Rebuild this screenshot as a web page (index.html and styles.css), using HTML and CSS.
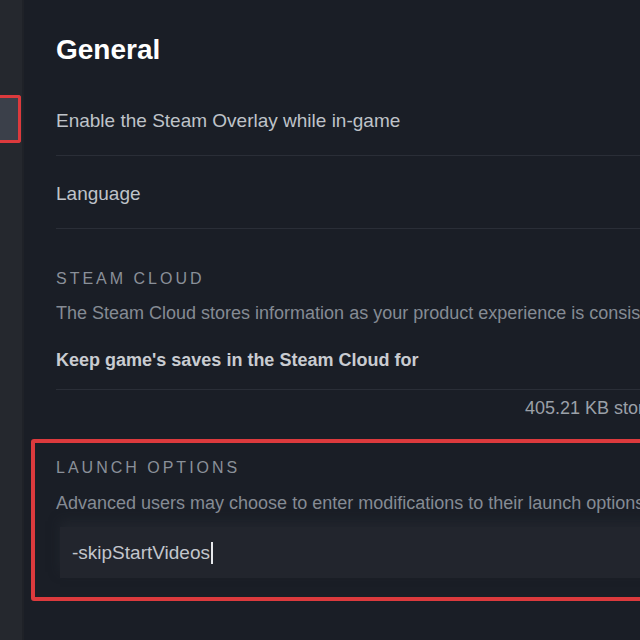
FILE: index.html
```html
<!DOCTYPE html>
<html lang="en">
<head>
  <meta charset="UTF-8">
  <title>Properties - General</title>
  <link rel="stylesheet" href="styles.css">
</head>
<body>
  <div class="app">
    <div class="sidebar">
      <div class="nav-item selected"></div>
    </div>

    <div class="main">
      <h1>General</h1>

      <div class="row first">Enable the Steam Overlay while in-game</div>
      <div class="row">Language</div>

      <div class="section cloud">
        <div class="section-title">Steam Cloud</div>
        <div class="section-desc">The Steam Cloud stores information as your product experience is consistent across all your devices.</div>
        <div class="cloud-toggle">Keep game's saves in the Steam Cloud for</div>
      </div>
      <div class="storage">405.21 KB stored</div>

      <div class="section launch highlight">
        <div class="section-title">Launch Options</div>
        <div class="section-desc">Advanced users may choose to enter modifications to their launch options.</div>
        <div class="launch-input">-skipStartVideos<span class="caret"></span></div>
      </div>
    </div>
  </div>
</body>
</html>
```

FILE: styles.css
```css
html, body {
  margin: 0;
  height: 100%;
  overflow: hidden;
}

body {
  font-family: "Liberation Sans", Arial, sans-serif;
  background-color: #1a1e26;
  color: #bfc3c9;
}

.app {
  display: flex;
  width: 700px;
  min-height: 640px;
}

/* barra lateral */
.sidebar {
  width: 24px;
  flex-shrink: 0;
  background-color: #25282e;
  box-shadow: inset -2px 0 0 #1f2228;
}

.nav-item {
  height: 42px;
  width: 18px;
  margin-top: 95px;
  background-color: #3b404a;
  border: 3px solid #dc3a3d;
  border-left: none;
  border-radius: 0 3px 3px 0;
}

/* contenido */
.main {
  width: 608px;
  padding: 33px 0 0 32px;
}

h1 {
  margin: 0 0 16px;
  font-size: 28px;
  line-height: 34px;
  font-weight: bold;
  color: #ffffff;
}

.row {
  padding: 26px 0 22px;
  font-size: 19px;
  line-height: 24px;
  border-bottom: 1px solid #2a2e37;
  white-space: nowrap;
}

.section {
  white-space: nowrap;
  overflow: hidden;
}

.cloud {
  padding: 40px 0 17px;
  border-bottom: 1px solid #2a2e37;
}

.section-title {
  font-size: 16px;
  line-height: 20px;
  letter-spacing: 3px;
  text-transform: uppercase;
  color: #8a9099;
}

.section-desc {
  margin-top: 12px;
  font-size: 18px;
  line-height: 24px;
  color: #858b94;
}

.cloud-toggle {
  margin-top: 23px;
  font-size: 18px;
  line-height: 24px;
  font-weight: bold;
  color: #c9ccd1;
}

.storage {
  margin: 8px 0 21px;
  text-align: right;
  font-size: 18px;
  line-height: 20px;
  color: #9ba0a8;
}

/* recuadro de opciones de lanzamiento */
.highlight {
  margin: 0 -30px 0 -25px;
  padding: 15px 26px 19px 21px;
  border: 4px solid #dc3a3d;
  border-radius: 3px;
}

.launch .section-desc {
  margin-top: 13px;
}

.launch-input {
  display: flex;
  align-items: center;
  height: 51px;
  margin: 12px 0 0 4px;
  padding-left: 12px;
  background-color: #22252d;
  box-shadow: 0 -6px 10px rgba(40, 44, 52, 0.5);
  font-size: 19px;
  color: #c3c6cc;
}

.caret {
  display: inline-block;
  width: 2px;
  height: 22px;
  margin-left: 1px;
  background-color: #e6e8eb;
}
```
